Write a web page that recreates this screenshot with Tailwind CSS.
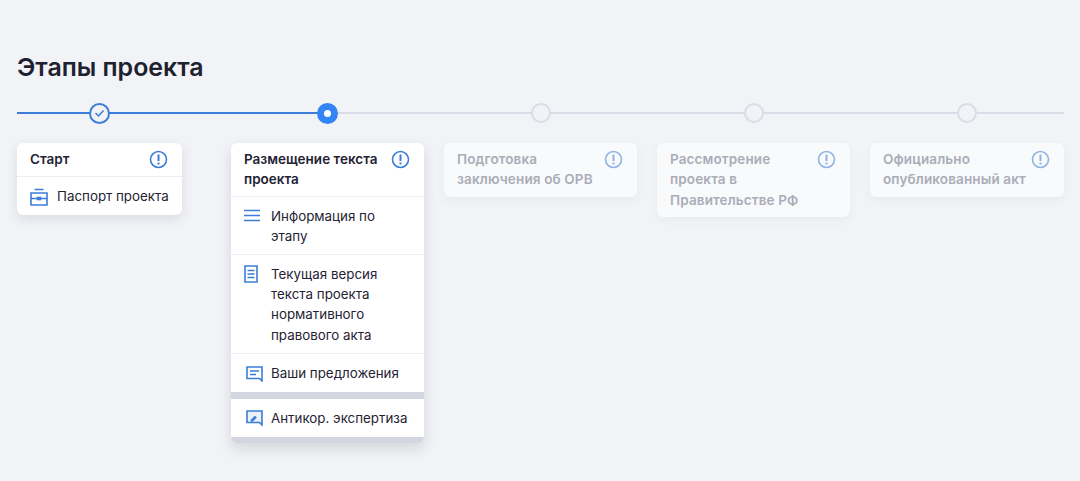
<!DOCTYPE html>
<html lang="ru">
<head>
    <meta charset="UTF-8">
    <title>Этапы проекта</title>
    <script src="https://cdn.jsdelivr.net/npm/@tailwindcss/browser@4"></script>
</head>
<body class="bg-[#f2f3f6] font-['Inter',sans-serif] text-[#1f2333]">
    <div class="w-[1080px] h-[481px] overflow-hidden pl-[17px] pr-[16px] pt-[52px]">
        <h1 class="text-[24.9px] leading-[30px] font-semibold text-[#1d2130]">Этапы проекта</h1>

        <!-- Timeline -->
        <div class="relative mt-[21px] h-[21px]">
            <div class="absolute left-0 right-0 top-[9px] h-[2px] bg-[#d9dde8]"></div>
            <div class="absolute left-0 w-[310px] top-[9px] h-[2px] bg-[#3b7dd8]"></div>
            <div class="relative grid grid-cols-[194px_193px_193px_193px_194px] gap-[20px]">
                <div class="w-[165px] flex justify-center">
                    <div class="w-[21px] h-[21px] rounded-full border-2 border-[#3b7dd8] bg-[#f2f3f6] flex items-center justify-center">
                        <svg width="11" height="9" viewBox="0 0 11 9" fill="none" stroke="#3b7dd8" stroke-width="1.5"><path d="M1.5 4l3 3 5-5.5"/></svg>
                    </div>
                </div>
                <div class="flex justify-center">
                    <div class="w-[21px] h-[21px] rounded-full bg-[#3385f5] flex items-center justify-center">
                        <div class="w-[7px] h-[7px] rounded-full bg-white"></div>
                    </div>
                </div>
                <div class="flex justify-center"><div class="w-[20px] h-[20px] rounded-full border-2 border-[#d9dde8] bg-[#f2f3f6]"></div></div>
                <div class="flex justify-center"><div class="w-[20px] h-[20px] rounded-full border-2 border-[#d9dde8] bg-[#f2f3f6]"></div></div>
                <div class="flex justify-center"><div class="w-[20px] h-[20px] rounded-full border-2 border-[#d9dde8] bg-[#f2f3f6]"></div></div>
            </div>
        </div>

        <!-- Stages -->
        <div class="mt-[19px] grid grid-cols-[194px_193px_193px_193px_194px] gap-[20px] items-start text-[13.35px] leading-[20.4px]">
            <!-- Start -->
            <div class="w-[165px] bg-white rounded-[6px] shadow-[0_4px_12px_rgba(40,50,80,0.12)]">
                <div class="flex justify-between pl-[13px] pr-[14px] pt-[6px] pb-[7px] text-[13.5px] font-semibold border-b border-[#eceef2]">
                    <span>Старт</span>
                    <svg class="mt-[1px]" width="19" height="19" viewBox="0 0 19 19" fill="none" stroke="#3b7dd8"><circle cx="9.5" cy="9.5" r="8" stroke-width="1.6"/><path d="M9.5 4.5v6.5M9.5 12.5v2" stroke-width="2"/></svg>
                </div>
                <div class="flex items-center gap-[9px] pl-[13px] pt-[9px] pb-[8px]">
                    <svg class="shrink-0" width="18" height="18" viewBox="0 0 18 18" fill="none" stroke="#3b7dd8" stroke-width="1.6"><path d="M4.5 1.5h9M1 5h16v12H1zM1 10.5h16"/><rect x="7.5" y="9.5" width="3" height="2" fill="#3b7dd8"/></svg>
                    <span>Паспорт проекта</span>
                </div>
            </div>

            <!-- Active stage -->
            <div class="bg-white rounded-[6px] shadow-[0_6px_14px_rgba(40,50,80,0.14)] overflow-hidden">
                <div class="flex justify-between pl-[13px] pr-[14px] py-[6px] text-[13.5px] font-semibold border-b border-[#eceef2]">
                    <span class="w-[140px]">Размещение текста проекта</span>
                    <svg class="mt-[1px] shrink-0" width="19" height="19" viewBox="0 0 19 19" fill="none" stroke="#3b7dd8"><circle cx="9.5" cy="9.5" r="8" stroke-width="1.6"/><path d="M9.5 4.5v6.5M9.5 12.5v2" stroke-width="2"/></svg>
                </div>
                <div class="flex gap-[11px] pl-[13px] pr-[14px] pt-[9px] pb-[7px] border-b border-[#eceef2]">
                    <svg class="shrink-0 mt-[3px]" width="16" height="13" viewBox="0 0 16 13" fill="none" stroke="#3b7dd8" stroke-width="1.6"><path d="M0 1.5h16M0 6.5h16M0 11.5h16"/></svg>
                    <span>Информация по этапу</span>
                </div>
                <div class="flex gap-[13px] pl-[13px] pr-[14px] pt-[9px] pb-[8px] border-b border-[#eceef2]">
                    <svg class="shrink-0 mt-[1px]" width="14" height="18" viewBox="0 0 14 18" fill="none" stroke="#3b7dd8" stroke-width="1.6"><path d="M1 1h12v16H1z"/><path d="M3.5 5.5h7M3.5 9h7M3.5 12.5h7" stroke-width="1.3"/></svg>
                    <span>Текущая версия текста проекта нормативного правового акта</span>
                </div>
                <div class="flex items-center gap-[8px] pl-[15px] pt-[9px] pb-[8px] border-b-[7px] border-[#d3d5e0]">
                    <svg class="shrink-0 mt-[1px]" width="17" height="16" viewBox="0 0 17 16" fill="none" stroke="#3b7dd8" stroke-width="1.6"><path d="M1 1h15v14l-2.5-2.5H1z"/><path d="M4 5h9M4 8.5h6" stroke-width="1.4"/></svg>
                    <span>Ваши предложения</span>
                </div>
                <div class="flex items-center gap-[8px] pl-[15px] py-[9px] border-b-[6px] border-[#d3d5e0]">
                    <svg class="shrink-0 mt-[1px]" width="17" height="16" viewBox="0 0 17 16" fill="none" stroke="#3b7dd8" stroke-width="1.6"><path d="M1 1h15v14l-2.5-2.5H1z" fill="#eaf1fb"/><path d="M5 9.8l3.8-3.8 1.8 1.6-3.8 3.7H5z" fill="#3b7dd8" stroke-width="0.6"/></svg>
                    <span>Антикор. экспертиза</span>
                </div>
            </div>

            <!-- Inactive stages -->
            <div class="bg-[#f9fafb] rounded-[6px] shadow-[0_3px_10px_rgba(40,50,80,0.05)] flex justify-between pl-[13px] pr-[14px] pt-[6px] pb-[7px] text-[13.5px] tracking-[0.13px] font-semibold text-[#a9adb8]">
                <span class="w-[140px]">Подготовка заключения об ОРВ</span>
                <svg class="mt-[1px] shrink-0" width="19" height="19" viewBox="0 0 19 19" fill="none" stroke="#8fb4e4"><circle cx="9.5" cy="9.5" r="8" stroke-width="1.6"/><path d="M9.5 4.5v6.5M9.5 12.5v2" stroke-width="2"/></svg>
            </div>
            <div class="bg-[#f9fafb] rounded-[6px] shadow-[0_3px_10px_rgba(40,50,80,0.05)] flex justify-between pl-[13px] pr-[14px] pt-[6px] pb-[7px] text-[13.5px] tracking-[0.13px] font-semibold text-[#a9adb8]">
                <span class="w-[130px]">Рассмотрение проекта в Правительстве РФ</span>
                <svg class="mt-[1px] shrink-0" width="19" height="19" viewBox="0 0 19 19" fill="none" stroke="#8fb4e4"><circle cx="9.5" cy="9.5" r="8" stroke-width="1.6"/><path d="M9.5 4.5v6.5M9.5 12.5v2" stroke-width="2"/></svg>
            </div>
            <div class="bg-[#f9fafb] rounded-[6px] shadow-[0_3px_10px_rgba(40,50,80,0.05)] flex justify-between pl-[13px] pr-[14px] pt-[6px] pb-[7px] text-[13.5px] tracking-[0.13px] font-semibold text-[#a9adb8]">
                <span class="w-[146px]">Официально опубликованный акт</span>
                <svg class="mt-[1px] shrink-0" width="19" height="19" viewBox="0 0 19 19" fill="none" stroke="#8fb4e4"><circle cx="9.5" cy="9.5" r="8" stroke-width="1.6"/><path d="M9.5 4.5v6.5M9.5 12.5v2" stroke-width="2"/></svg>
            </div>
        </div>
    </div>
</body>
</html>
